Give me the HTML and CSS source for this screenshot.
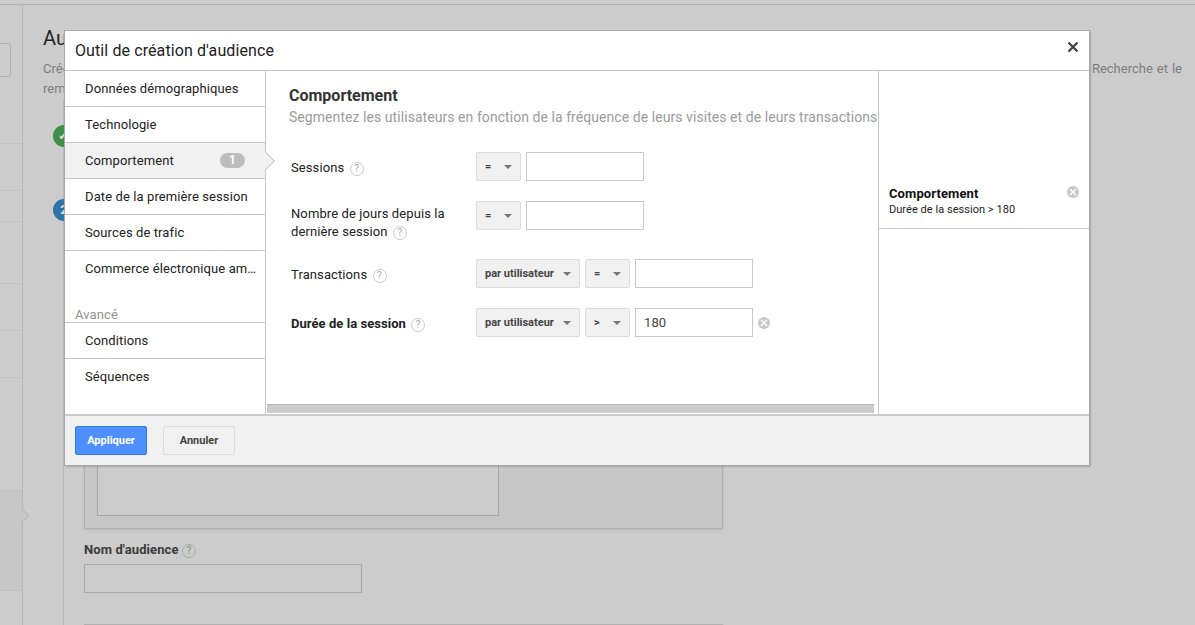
FILE: index.html
```html
<!DOCTYPE html>
<html lang="fr">

<head>
    <meta charset="UTF-8">
    <meta name="viewport" content="width=device-width, initial-scale=1.0">
    <title>Outil de création d'audience</title>
    <link rel="stylesheet" href="styles.css">
</head>

<body>
    <div class="topbar"></div>
    <div class="page">
        <div class="side">
            <div class="side-btn"></div>
            <div class="side-row side-row1"></div>
            <div class="side-row side-row2"></div>
            <div class="side-row side-row3"></div>
            <div class="side-row side-row4"></div>
            <div class="side-row side-row5"></div>
            <div class="side-row side-row6"></div>
            <div class="side-current"></div>
        </div>
        <div class="main">
            <h1 class="main-title">Audiences</h1>
            <p class="main-text">Créez des listes d'audiences pour votre remarketing à partir de vos données Analytics et utilisez-les ensuite dans vos campagnes AdWords sur le Réseau Display, sur le Réseau de Recherche et le remarketing sur d'autres canaux.</p>
            <div class="steps">
                <div class="step-line"></div>
                <span class="step-dot step-done">✓</span>
                <span class="step-dot step-two">2</span>
                <div class="card">
                    <div class="card-inner"></div>
                </div>
                <div class="field-label">Nom d'audience <span class="help help-dark">?</span></div>
                <div class="field-input"></div>
                <div class="card-next"></div>
            </div>
        </div>
    </div>

    <div class="modal">
        <div class="modal-head">
            <span>Outil de création d'audience</span>
            <svg class="close" width="12" height="12" viewBox="0 0 12 12">
                <path d="M1.5 1.5l9 9M10.5 1.5l-9 9" stroke="#404040" stroke-width="2.2" />
            </svg>
        </div>
        <div class="modal-body">
            <div class="nav">
                <div class="nav-item">Données démographiques</div>
                <div class="nav-item">Technologie</div>
                <div class="nav-item nav-on">Comportement <span class="count">1</span></div>
                <div class="nav-item">Date de la première session</div>
                <div class="nav-item">Sources de trafic</div>
                <div class="nav-item nav-last">Commerce électronique am…</div>
                <div class="nav-title">Avancé</div>
                <div class="nav-item">Conditions</div>
                <div class="nav-item nav-last">Séquences</div>
            </div>
            <div class="content">
                <div class="content-main">
                    <h2>Comportement</h2>
                    <p class="sub">Segmentez les utilisateurs en fonction de la fréquence de leurs visites et de leurs transactions</p>
                    <div class="row row1">
                        <div class="label">Sessions <span class="help">?</span></div>
                        <div class="select select-op">= <i class="caret"></i></div>
                        <div class="input"></div>
                    </div>
                    <div class="row row2">
                        <div class="label label-two">Nombre de jours depuis la dernière session <span class="help">?</span></div>
                        <div class="select select-op">= <i class="caret"></i></div>
                        <div class="input"></div>
                    </div>
                    <div class="row row3">
                        <div class="label">Transactions <span class="help">?</span></div>
                        <div class="select select-per">par utilisateur <i class="caret"></i></div>
                        <div class="select select-op">= <i class="caret"></i></div>
                        <div class="input"></div>
                    </div>
                    <div class="row row4">
                        <div class="label label-bold">Durée de la session <span class="help">?</span></div>
                        <div class="select select-per">par utilisateur <i class="caret"></i></div>
                        <div class="select select-op">&gt; <i class="caret"></i></div>
                        <div class="input">180</div>
                        <span class="remove"><svg width="8" height="8" viewBox="0 0 8 8"><path d="M1 1l6 6M7 1l-6 6" stroke="#fff" stroke-width="1.4" /></svg></span>
                    </div>
                </div>
                <div class="scrollbar"></div>
            </div>
            <div class="summary">
                <div class="summary-box">
                    <div>
                        <div class="summary-title">Comportement</div>
                        <div class="summary-text">Durée de la session &gt; 180</div>
                    </div>
                    <span class="remove"><svg width="8" height="8" viewBox="0 0 8 8"><path d="M1 1l6 6M7 1l-6 6" stroke="#fff" stroke-width="1.4" /></svg></span>
                </div>
            </div>
        </div>
        <div class="modal-foot">
            <button class="btn btn-blue">Appliquer</button>
            <button class="btn">Annuler</button>
        </div>
    </div>
</body>

</html>
```

FILE: styles.css
```css
* {
    box-sizing: border-box;
}

html,
body {
    height: 100%;
}

body {
    margin: 0;
    background: #ccc;
    color: #222;
    font-family: Roboto, "Liberation Sans", sans-serif;
    font-size: 13px;
    letter-spacing: 0.1px;
    overflow: hidden;
}

.topbar {
    height: 5px;
    border-bottom: 1px solid #b4b4b4;
}

/* page behind the dialog */
.page {
    display: flex;
    height: 620px;
    overflow: hidden;
}

.side {
    position: relative;
    width: 23px;
    flex: none;
    border-right: 1px solid #b8b8b8;
}

.side-btn {
    position: absolute;
    left: -4px;
    top: 38px;
    width: 15px;
    height: 34px;
    border: 1px solid #b4b4b4;
    border-radius: 2px;
}

.side-row {
    position: absolute;
    left: 0;
    right: 0;
    height: 1px;
    background: #c2c2c2;
}

.side-row1 { top: 138px; }
.side-row2 { top: 185px; }
.side-row3 { top: 216px; }
.side-row4 { top: 278px; }
.side-row5 { top: 325px; }
.side-row6 { top: 372px; }

.side-current {
    position: absolute;
    left: 0;
    right: 0;
    top: 485px;
    height: 101px;
    background: #c7c7c7;
    border-top: 1px solid #c2c2c2;
    border-bottom: 1px solid #c2c2c2;
}

.side-current::after {
    content: "";
    position: absolute;
    right: -5px;
    top: 19px;
    width: 10px;
    height: 10px;
    background: #c8c8c8;
    border-top: 1px solid #b8b8b8;
    border-right: 1px solid #b8b8b8;
    transform: rotate(45deg);
}

.main {
    flex: 1;
    min-width: 0;
    padding: 21px 0 0 20px;
}

.main-title {
    margin: 0;
    font-size: 20px;
    font-weight: 400;
    line-height: 24px;
    color: #222;
}

.main-text {
    margin: 9px 0 0;
    width: 1139px;
    color: #7d7d7d;
    line-height: 20px;
    letter-spacing: 0;
    text-align: justify;
}

.steps {
    position: relative;
    padding: 0 0 0 41px;
}

.step-line {
    position: absolute;
    left: 20px;
    top: 0;
    bottom: 0;
    width: 1px;
    background: #b8b8b8;
}

.step-dot {
    position: absolute;
    left: 10px;
    width: 22px;
    height: 22px;
    border-radius: 50%;
    color: #ddd;
    font-size: 13px;
    font-weight: 700;
    line-height: 22px;
    text-align: center;
}

.step-done {
    top: 26px;
    background: #3f8f45;
}

.step-two {
    top: 100px;
    background: #2f74a8;
}

.card {
    width: 639px;
    height: 430px;
    padding: 13px 12px 12px;
    border: 1px solid #b0b0b0;
    background: #c7c7c7;
    box-shadow: 0 1px 2px #bbb;
}

.card-inner {
    width: 402px;
    height: 100%;
    border: 1px solid #a8a8a8;
    background: #ccc;
}

.field-label {
    height: 16px;
    margin-top: 13px;
    color: #3b3b3b;
    font-weight: 700;
    line-height: 16px;
}

.field-input {
    width: 278px;
    height: 29px;
    margin-top: 6px;
    border: 1px solid #a8a8a8;
}

.card-next {
    width: 639px;
    height: 1px;
    margin-top: 31px;
    background: #b0b0b0;
}

/* dialog */
.modal {
    position: absolute;
    left: 65px;
    top: 31px;
    width: 1024px;
    height: 434px;
    display: flex;
    flex-direction: column;
    background: #fff;
    box-shadow: 1px 1px 2px rgba(0, 0, 0, 0.45);
    outline: 1px solid #a8a8a8;
}

.modal-head {
    display: flex;
    align-items: center;
    justify-content: space-between;
    height: 40px;
    flex: none;
    padding: 0 10px;
    border-bottom: 1px solid #c8c8c8;
    font-size: 16px;
    color: #222;
}

.close {
    margin-bottom: 8px;
}

.modal-body {
    display: flex;
    flex: 1;
    min-height: 0;
    border-bottom: 2px solid #ccc;
}

.nav {
    width: 201px;
    flex: none;
    border-right: 1px solid #c8c8c8;
}

.nav-item {
    display: flex;
    align-items: center;
    justify-content: space-between;
    height: 36px;
    padding: 0 20px;
    border-bottom: 1px solid #c8c8c8;
    color: #222;
    line-height: 35px;
    white-space: nowrap;
}

.nav-last {
    border-bottom-color: transparent;
}

.nav-on {
    position: relative;
    background: #f1f1f1;
}

.nav-on::after {
    content: "";
    position: absolute;
    right: -7px;
    top: 11px;
    width: 13px;
    height: 13px;
    background: #f1f1f1;
    border-top: 1px solid #c8c8c8;
    border-right: 1px solid #c8c8c8;
    transform: rotate(45deg);
}

.count {
    width: 25px;
    height: 15px;
    border-radius: 8px;
    background: #bdbdbd;
    color: #fff;
    font-size: 12px;
    font-weight: 700;
    line-height: 15px;
    text-align: center;
}

.nav-title {
    height: 36px;
    padding: 19px 10px 0;
    border-bottom: 1px solid #c8c8c8;
    color: #939393;
    line-height: 17px;
}

.content {
    position: relative;
    width: 613px;
    flex: none;
    border-right: 1px solid #c8c8c8;
    overflow: hidden;
}

.content-main {
    padding: 15px 0 0 23px;
}

h2 {
    margin: 0;
    font-size: 16px;
    font-weight: 700;
    line-height: 20px;
    letter-spacing: 0;
    color: #333;
}

.sub {
    margin: 1px 0 0;
    font-size: 14px;
    line-height: 20px;
    letter-spacing: 0.06px;
    color: #9b9b9b;
    white-space: nowrap;
}

.row {
    display: flex;
    align-items: flex-start;
    gap: 5px;
    margin-left: 2px;
}

.row1 {
    margin-top: 25px;
}

.row2 {
    margin-top: 20px;
}

.row3 {
    margin-top: 18px;
}

.row4 {
    margin-top: 20px;
}

.label {
    width: 180px;
    flex: none;
    padding-top: 7px;
    line-height: 18px;
    color: #222;
}

.label-two {
    padding-top: 4px;
}

.label-bold {
    font-weight: 700;
    letter-spacing: 0.05px;
}

.help {
    display: inline-block;
    width: 14px;
    height: 14px;
    margin-left: 2px;
    border: 1px solid #ccc;
    border-radius: 50%;
    color: #aaa;
    font-size: 10px;
    font-weight: 400;
    line-height: 12px;
    text-align: center;
    vertical-align: 0;
}

.help-dark {
    margin-left: 0;
    border-color: #aaa;
    color: #8a8a8a;
}

.select {
    display: flex;
    align-items: center;
    justify-content: space-between;
    height: 29px;
    padding: 0 8px;
    border: 1px solid #dcdcdc;
    border-radius: 2px;
    background: #f1f1f1;
    color: #444;
    font-size: 11px;
    font-weight: 700;
    letter-spacing: 0;
    white-space: nowrap;
}

.select-op {
    width: 45px;
}

.select-per {
    width: 104px;
}

.caret {
    width: 0;
    height: 0;
    border-top: 4px solid #777;
    border-left: 4px solid transparent;
    border-right: 4px solid transparent;
}

.input {
    width: 118px;
    height: 29px;
    padding-left: 8px;
    border: 1px solid #c8c8c8;
    color: #444;
    line-height: 27px;
}

.remove {
    display: flex;
    align-items: center;
    justify-content: center;
    width: 12px;
    height: 12px;
    margin-top: 9px;
    border-radius: 50%;
    background: #c8c8c8;
}

.scrollbar {
    position: absolute;
    left: 1px;
    right: 4px;
    bottom: 1px;
    height: 9px;
    border-top: 1px solid #b4b4b4;
    background: #ccc;
}

.summary {
    flex: 1;
    padding-top: 106px;
}

.summary-box {
    display: flex;
    justify-content: space-between;
    height: 52px;
    padding: 9px 10px 0;
    border-bottom: 1px solid #c8c8c8;
}

.summary-box .remove {
    margin-top: 0;
}

.summary-title {
    font-weight: 700;
    color: #111;
    line-height: 16px;
}

.summary-text {
    font-size: 11px;
    color: #222;
    line-height: 15px;
    letter-spacing: 0.04px;
}

.modal-foot {
    display: flex;
    gap: 16px;
    height: 49px;
    flex: none;
    padding: 10px 10px 0;
    background: #f1f1f1;
}

.btn {
    width: 72px;
    height: 29px;
    border: 1px solid #dcdcdc;
    border-radius: 2px;
    background: #f1f1f1;
    color: #444;
    font-family: inherit;
    font-size: 11px;
    font-weight: 700;
    letter-spacing: 0;
}

.btn-blue {
    border-color: #3079ed;
    background: #4d90fe;
    color: #fff;
}
```
